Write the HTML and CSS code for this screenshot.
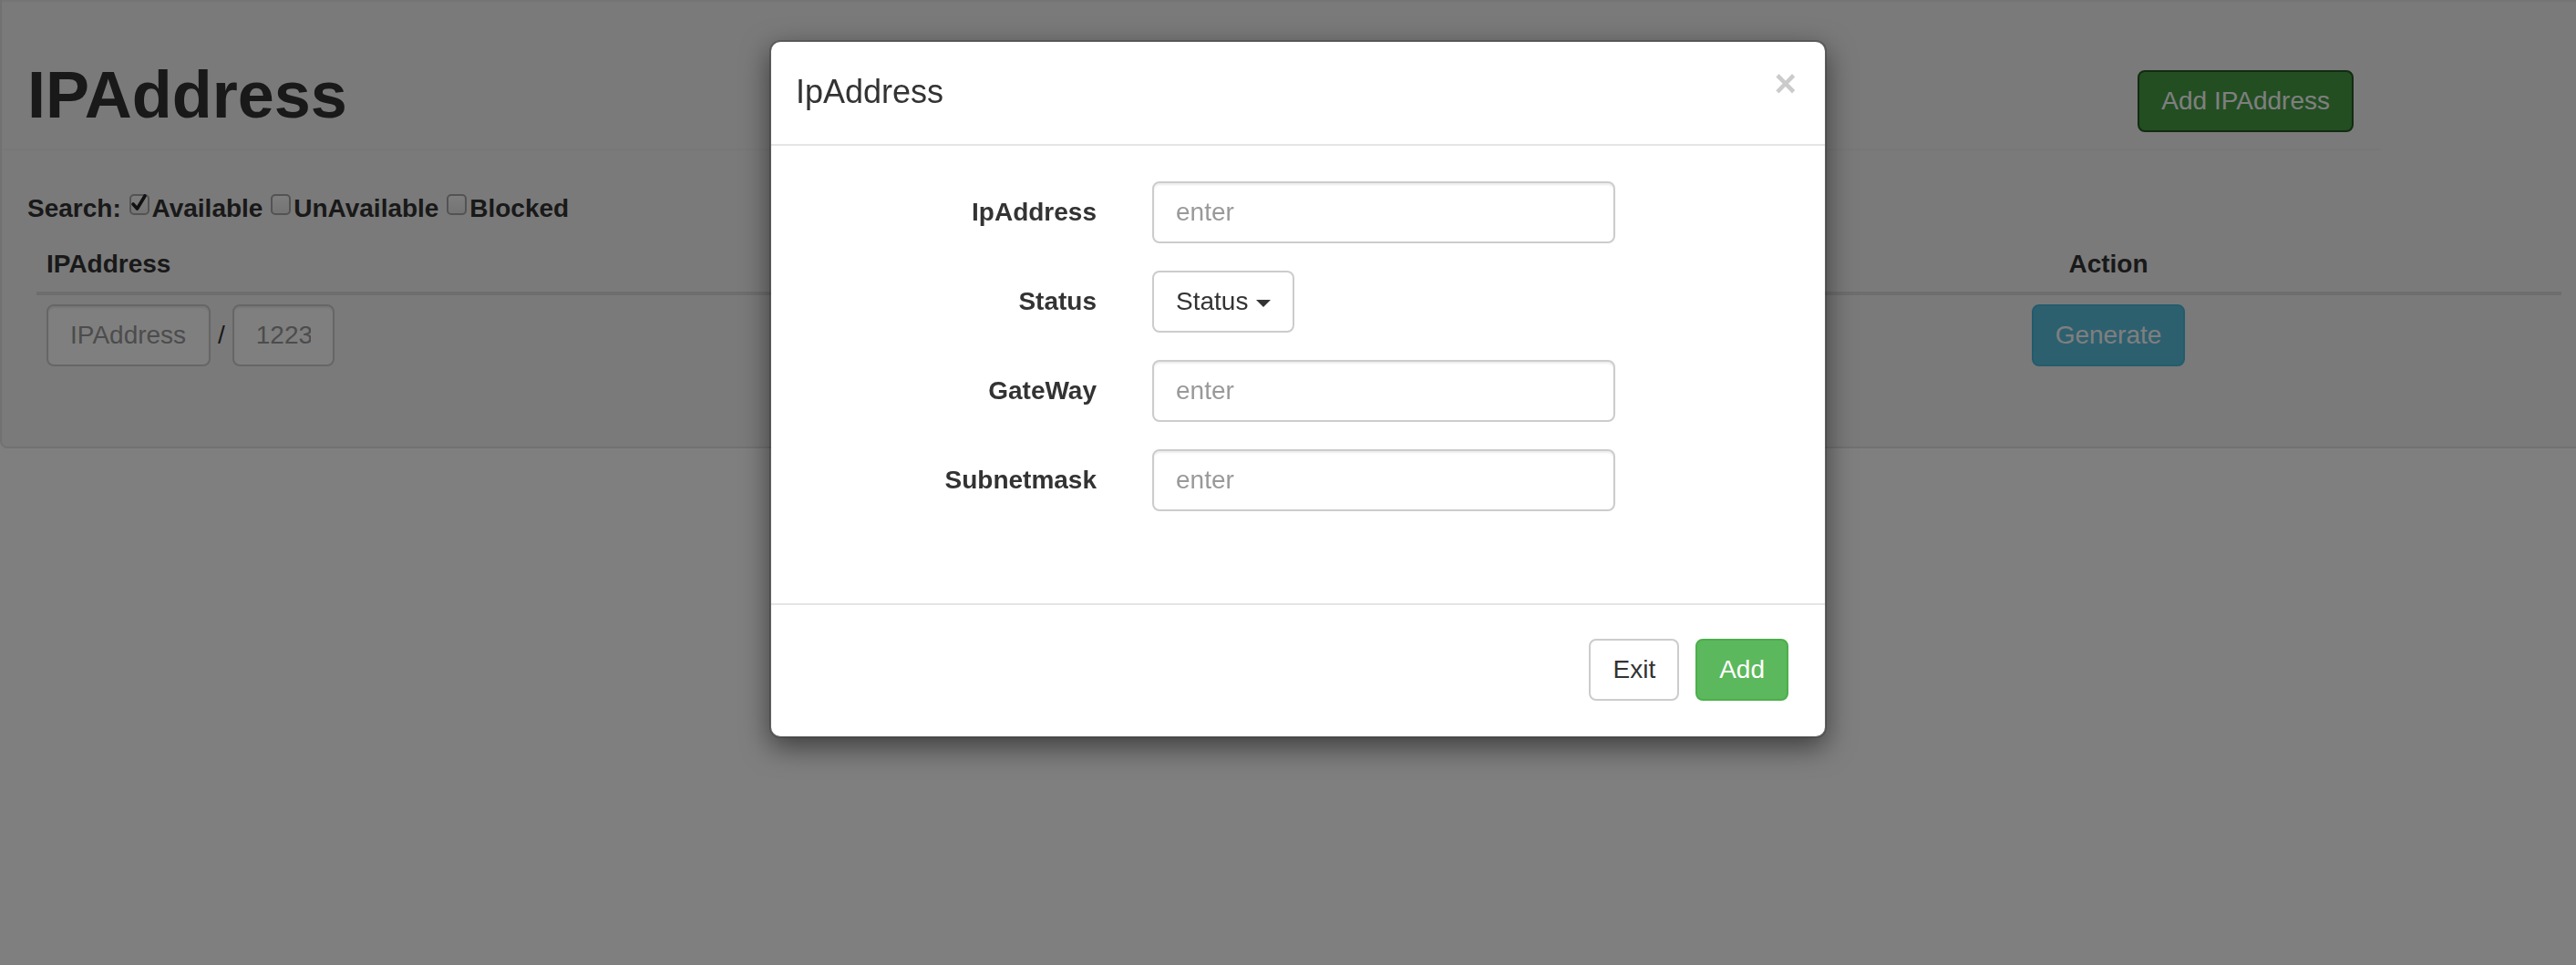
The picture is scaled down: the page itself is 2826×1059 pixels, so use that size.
FILE: index.html
```html
<!DOCTYPE html>
<html lang="en">
<head>
<meta charset="utf-8">
<title>IPAddress</title>
<link rel="stylesheet" href="styles.css">
</head>
<body>
<div class="well">
  <div class="page-header">
    <h1>IPAddress</h1>
    <button class="btn btn-success-focus">Add IPAddress</button>
  </div>
  <div class="search">Search: <span class="cb"><svg class="check" viewBox="0 0 22 23" width="22" height="23"><path d="M4 12 L8.5 17 L17 3" fill="none" stroke="#222" stroke-width="3.6" stroke-linecap="round" stroke-linejoin="round"/></svg></span>Available <span class="cb"></span>UnAvailable <span class="cb"></span>Blocked</div>
  <table class="tbl">
    <colgroup><col class="col-a"><col class="col-b"><col class="col-c"></colgroup>
    <thead>
      <tr><th>IPAddress</th><th></th><th class="center">Action</th></tr>
    </thead>
    <tbody>
      <tr>
        <td><div class="ipcell"><input class="field ip" placeholder="IPAddress"><span class="slash">/</span><input class="field mask" placeholder="1223"></div></td>
        <td></td>
        <td class="center"><button class="btn btn-info">Generate</button></td>
      </tr>
    </tbody>
  </table>
</div>

<div class="backdrop"></div>

<div class="modal">
  <div class="modal-header">
    <h4 class="modal-title">IpAddress</h4>
    <button class="close">&times;</button>
  </div>
  <div class="modal-body">
    <div class="form-row">
      <label class="control-label">IpAddress</label>
      <input class="form-control" placeholder="enter">
    </div>
    <div class="form-row">
      <label class="control-label">Status</label>
      <div><button class="btn btn-default">Status <span class="caret"></span></button></div>
    </div>
    <div class="form-row">
      <label class="control-label">GateWay</label>
      <input class="form-control" placeholder="enter">
    </div>
    <div class="form-row">
      <label class="control-label">Subnetmask</label>
      <input class="form-control" placeholder="enter">
    </div>
  </div>
  <div class="modal-footer">
    <button class="btn btn-default">Exit</button>
    <button class="btn btn-success">Add</button>
  </div>
</div>
</body>
</html>
```

FILE: styles.css
```css
* { box-sizing: border-box; }

html, body {
  margin: 0;
  padding: 0;
  background: #fff;
  font-family: "Liberation Sans", Arial, sans-serif;
  font-size: 28px;
  line-height: 40px;
  color: #333;
  overflow: hidden;
}

.well {
  width: 2846px;
  background: #f5f5f5;
  border: 2px solid #e3e3e3;
  border-top: 0;
  border-radius: 0 0 8px 8px;
  box-shadow: inset 0 2px 2px rgba(0,0,0,.05);
  padding: 0 0 38px 0;
}

.page-header {
  width: 2610px;
  display: flex;
  justify-content: space-between;
  align-items: flex-start;
  padding: 65px 30px 18px 28px;
  border-bottom: 2px solid #eee;
}

.page-header h1 {
  margin: 0;
  font-size: 72px;
  line-height: 79px;
  font-weight: bold;
  color: #333;
}

.page-header .btn { margin-top: 12px; }

.btn {
  display: inline-block;
  font-family: "Liberation Sans", Arial, sans-serif;
  font-size: 28px;
  line-height: 40px;
  padding: 12px 24px;
  border: 2px solid transparent;
  border-radius: 8px;
  cursor: pointer;
  white-space: nowrap;
  margin: 0;
}

.btn-success-focus { background: #449d44; border-color: #255625; color: #fff; }
.btn-success { background: #5cb85c; border-color: #4cae4c; color: #fff; }
.btn-info { background: #5bc0de; border-color: #46b8da; color: #fff; }
.btn-default { background: #fff; border-color: #ccc; color: #333; }

.search {
  margin: 44px 0 10px;
  padding-left: 28px;
  font-weight: bold;
  line-height: 40px;
}

.cb {
  display: inline-block;
  position: relative;
  width: 22px;
  height: 23px;
  margin: 0 3px 0 1px;
  border: 2px solid #a6a6a6;
  border-radius: 5px;
  background: linear-gradient(#fcfcfc, #e8e8e8);
  vertical-align: 2px;
}

.cb .check {
  position: absolute;
  left: -2px;
  top: -3px;
  overflow: visible;
}

.tbl {
  margin: 0 0 40px 38px;
  width: 2770px;
  border-collapse: collapse;
  table-layout: fixed;
}

.col-a { width: 888px; }
.col-b { width: 888px; }
.col-c { width: 994px; }

.tbl th {
  text-align: left;
  font-weight: bold;
  padding: 11px 11px 10px;
  line-height: 40px;
  border-bottom: 4px solid #ddd;
}

.tbl td {
  padding: 10px 11px;
  vertical-align: top;
}

.tbl .center { text-align: center; }
.tbl .center .btn { vertical-align: top; }

.ipcell {
  display: flex;
  align-items: center;
}

.field {
  height: 68px;
  padding: 12px 24px;
  font-family: "Liberation Sans", Arial, sans-serif;
  font-size: 28px;
  line-height: 40px;
  color: #555;
  background: #fff;
  border: 2px solid #ccc;
  border-radius: 8px;
  box-shadow: inset 0 2px 2px rgba(0,0,0,.075);
  outline: none;
}
.field::placeholder { color: #999; }
.field.ip { width: 180px; }
.field.mask { width: 112px; }

.slash {
  margin: 0 8px;
  line-height: 40px;
}

.backdrop {
  position: fixed;
  inset: 0;
  background: rgba(0,0,0,.5);
}

.modal {
  position: absolute;
  left: 844px;
  top: 44px;
  width: 1160px;
  background: #fff;
  background-clip: padding-box;
  border: 2px solid rgba(0,0,0,.2);
  border-radius: 12px;
  box-shadow: 0 10px 30px rgba(0,0,0,.5);
}

.modal-header {
  display: flex;
  justify-content: space-between;
  align-items: flex-start;
  padding: 30px 31px 32px 27px;
  border-bottom: 2px solid #e5e5e5;
}

.modal-title {
  margin: 0;
  font-size: 36px;
  line-height: 50px;
  font-weight: normal;
  color: #333;
}

.close {
  margin-top: -5px;
  padding: 0;
  border: 0;
  background: transparent;
  font-family: "Liberation Sans", Arial, sans-serif;
  font-size: 42px;
  line-height: 42px;
  font-weight: bold;
  color: #000;
  opacity: .2;
  cursor: pointer;
}

.modal-body {
  padding: 39px 30px 101px;
  display: flex;
  flex-direction: column;
  gap: 30px;
}

.form-row {
  display: grid;
  grid-template-columns: 327px 508px;
  column-gap: 61px;
  height: 68px;
}

.control-label {
  text-align: right;
  font-weight: bold;
  padding-top: 14px;
  line-height: 40px;
}

.form-control {
  width: 508px;
  height: 68px;
  padding: 12px 24px;
  font-family: "Liberation Sans", Arial, sans-serif;
  font-size: 28px;
  line-height: 40px;
  color: #555;
  background: #fff;
  border: 2px solid #ccc;
  border-radius: 8px;
  box-shadow: inset 0 2px 2px rgba(0,0,0,.075);
  outline: none;
}
.form-control::placeholder { color: #999; }

.caret {
  display: inline-block;
  width: 0;
  height: 0;
  margin-left: 1px;
  vertical-align: middle;
  border-top: 8px solid #333;
  border-left: 8px solid transparent;
  border-right: 8px solid transparent;
}

.modal-footer {
  display: flex;
  justify-content: flex-end;
  gap: 18px;
  padding: 37px 40px 39px 30px;
  border-top: 2px solid #e5e5e5;
}
```
